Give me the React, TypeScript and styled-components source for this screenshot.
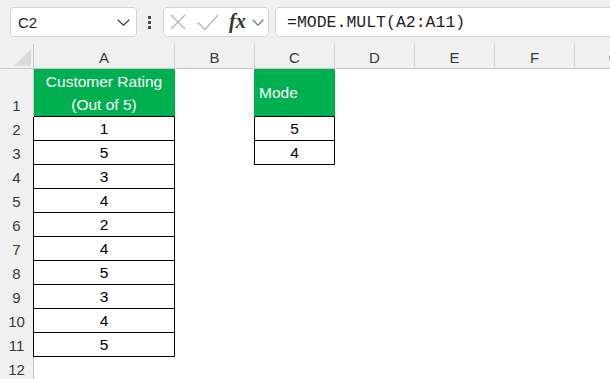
import React from 'react';
import styled, { createGlobalStyle } from 'styled-components';

const Global = createGlobalStyle`
  html, body { margin: 0; padding: 0; background: #ffffff; }
  body { font-family: "Liberation Sans", Arial, sans-serif; }
`;

const Page = styled.div`
  width: 610px;
  height: 379px;
  overflow: hidden;
  background: #ffffff;
`;

const Top = styled.div`
  display: flex;
  align-items: center;
  height: 30px;
  padding: 7px 0 7px 10px;
  background: #f0f0f0;
`;

const Box = styled.div<{ $w: number; $ml: number }>`
  box-sizing: border-box;
  flex: 0 0 auto;
  display: flex;
  align-items: center;
  width: ${(p) => p.$w}px;
  height: 30px;
  margin-left: ${(p) => p.$ml}px;
  background: #ffffff;
  border: 1px solid #d3d3d3;
  border-radius: 4px;
`;

const NameText = styled.span`
  flex: 1;
  padding-left: 7px;
  font-size: 15px;
  color: #1e1e1e;
`;

const Dots = styled.div`
  display: flex;
  flex-direction: column;
  gap: 2px;
  margin-left: 11px;
  span {
    display: block;
    width: 3px;
    height: 3px;
    background: #4a4a4a;
  }
`;

const Fx = styled.span`
  font-family: "Liberation Serif", "Times New Roman", serif;
  font-style: italic;
  font-weight: bold;
  font-size: 20px;
  color: #333333;
  margin-left: 10px;
  line-height: 1;
  padding-bottom: 2px;
`;

const Formula = styled.span`
  padding-left: 11px;
  font-family: "Liberation Mono", "Courier New", monospace;
  font-size: 16.5px;
  color: #1e1e1e;
  white-space: nowrap;
`;

const Grid = styled.div`
  display: grid;
  grid-template-columns: 34px 141px repeat(6, 80px);
  grid-template-rows: 25px 48px repeat(11, 24px);
`;

const HeadBase = styled.div`
  box-sizing: border-box;
  background: #f0f0f0;
  color: #3a3a3a;
  font-size: 15px;
  display: flex;
  justify-content: center;
`;

const Corner = styled(HeadBase)`
  position: relative;
  border-right: 1px solid #c8c8c8;
  border-bottom: 1px solid #c8c8c8;
  svg { position: absolute; left: 14px; top: 5px; }
`;

const ColHead = styled(HeadBase)`
  align-items: center;
  padding-top: 3px;
  border-right: 1px solid #d4d4d4;
  border-bottom: 1px solid #c8c8c8;
`;

const RowHead = styled(HeadBase)<{ $bottom?: boolean }>`
  align-items: ${(p) => (p.$bottom ? 'flex-end' : 'center')};
  padding-bottom: ${(p) => (p.$bottom ? '3px' : '0')};
  border-right: 1px solid #c8c8c8;
`;

type CellProps = {
  $head?: boolean;
  $bordered?: boolean;
  $left?: boolean;
  $align?: 'center' | 'left';
};

const Cell = styled.div<CellProps>`
  box-sizing: border-box;
  display: flex;
  align-items: center;
  justify-content: ${(p) => (p.$align === 'left' ? 'flex-start' : 'center')};
  padding-left: ${(p) => (p.$align === 'left' ? '4px' : '0')};
  text-align: center;
  font-size: 15.5px;
  line-height: 23px;
  color: ${(p) => (p.$head ? '#ffffff' : '#000000')};
  background: ${(p) => (p.$head ? '#00b050' : '#ffffff')};
  border-right: 1px solid
    ${(p) => (p.$head ? '#00b050' : p.$bordered ? '#000000' : '#ffffff')};
  border-bottom: 1px solid
    ${(p) => (p.$head || p.$bordered ? '#000000' : '#ffffff')};
  box-shadow: ${(p) =>
    p.$left ? `-1px 0 0 ${p.$head ? '#00b050' : '#000000'}` : 'none'};
`;

const Chevron = ({ color, w }: { color: string; w: number }) => (
  <svg width={w} height={7} viewBox={`0 0 ${w} 7`} fill="none">
    <path
      d={`M0.7 0.7 L${w / 2} ${6.2} L${w - 0.7} 0.7`}
      stroke={color}
      strokeWidth={1.3}
    />
  </svg>
);

const cols = ['A', 'B', 'C', 'D', 'E', 'F', 'G'];
const ratings = [1, 5, 3, 4, 2, 4, 5, 3, 4, 5];
const modes: Record<number, number> = { 2: 5, 3: 4 };

export default function App() {
  const rows: React.ReactNode[] = [];
  for (let r = 1; r <= 12; r++) {
    rows.push(
      <RowHead key={`h${r}`} $bottom={r === 1}>
        {r}
      </RowHead>
    );
    cols.forEach((c) => {
      const key = `${c}${r}`;
      if (c === 'A' && r === 1) {
        rows.push(
          <Cell key={key} $head>
            Customer Rating
            <br />
            (Out of 5)
          </Cell>
        );
      } else if (c === 'A' && r <= 11) {
        rows.push(
          <Cell key={key} $bordered $left>
            {ratings[r - 2]}
          </Cell>
        );
      } else if (c === 'C' && r === 1) {
        rows.push(
          <Cell key={key} $head $left $align="left">
            Mode
          </Cell>
        );
      } else if (c === 'C' && modes[r] !== undefined) {
        rows.push(
          <Cell key={key} $bordered $left>
            {modes[r]}
          </Cell>
        );
      } else {
        rows.push(<Cell key={key} />);
      }
    });
  }

  return (
    <Page>
      <Global />
      <Top>
        <Box $w={127} $ml={0}>
          <NameText>C2</NameText>
          <span style={{ marginRight: 6, display: 'flex' }}>
            <Chevron color="#444444" w={13} />
          </span>
        </Box>
        <Dots>
          <span />
          <span />
          <span />
        </Dots>
        <Box $w={106} $ml={12}>
          <svg width="16" height="16" viewBox="0 0 16 16" style={{ marginLeft: 6 }}>
            <path d="M1 1 L15 15 M15 1 L1 15" stroke="#b4b4b4" strokeWidth="1.3" fill="none" />
          </svg>
          <svg width="22" height="17" viewBox="0 0 22 17" style={{ marginLeft: 11 }}>
            <path d="M1 8.5 L8 15.5 L21 1" stroke="#b4b4b4" strokeWidth="1.3" fill="none" />
          </svg>
          <Fx>fx</Fx>
          <span style={{ marginLeft: 6, display: 'flex' }}>
            <Chevron color="#7a7a7a" w={12} />
          </span>
        </Box>
        <Box $w={360} $ml={6}>
          <Formula>=MODE.MULT(A2:A11)</Formula>
        </Box>
      </Top>
      <Grid>
        <Corner>
          <svg width="18" height="17" viewBox="0 0 18 17">
            <polygon points="17,0 17,17 0,17" fill="#dadada" />
          </svg>
        </Corner>
        {cols.map((c) => (
          <ColHead key={c}>{c}</ColHead>
        ))}
        {rows}
      </Grid>
    </Page>
  );
}
